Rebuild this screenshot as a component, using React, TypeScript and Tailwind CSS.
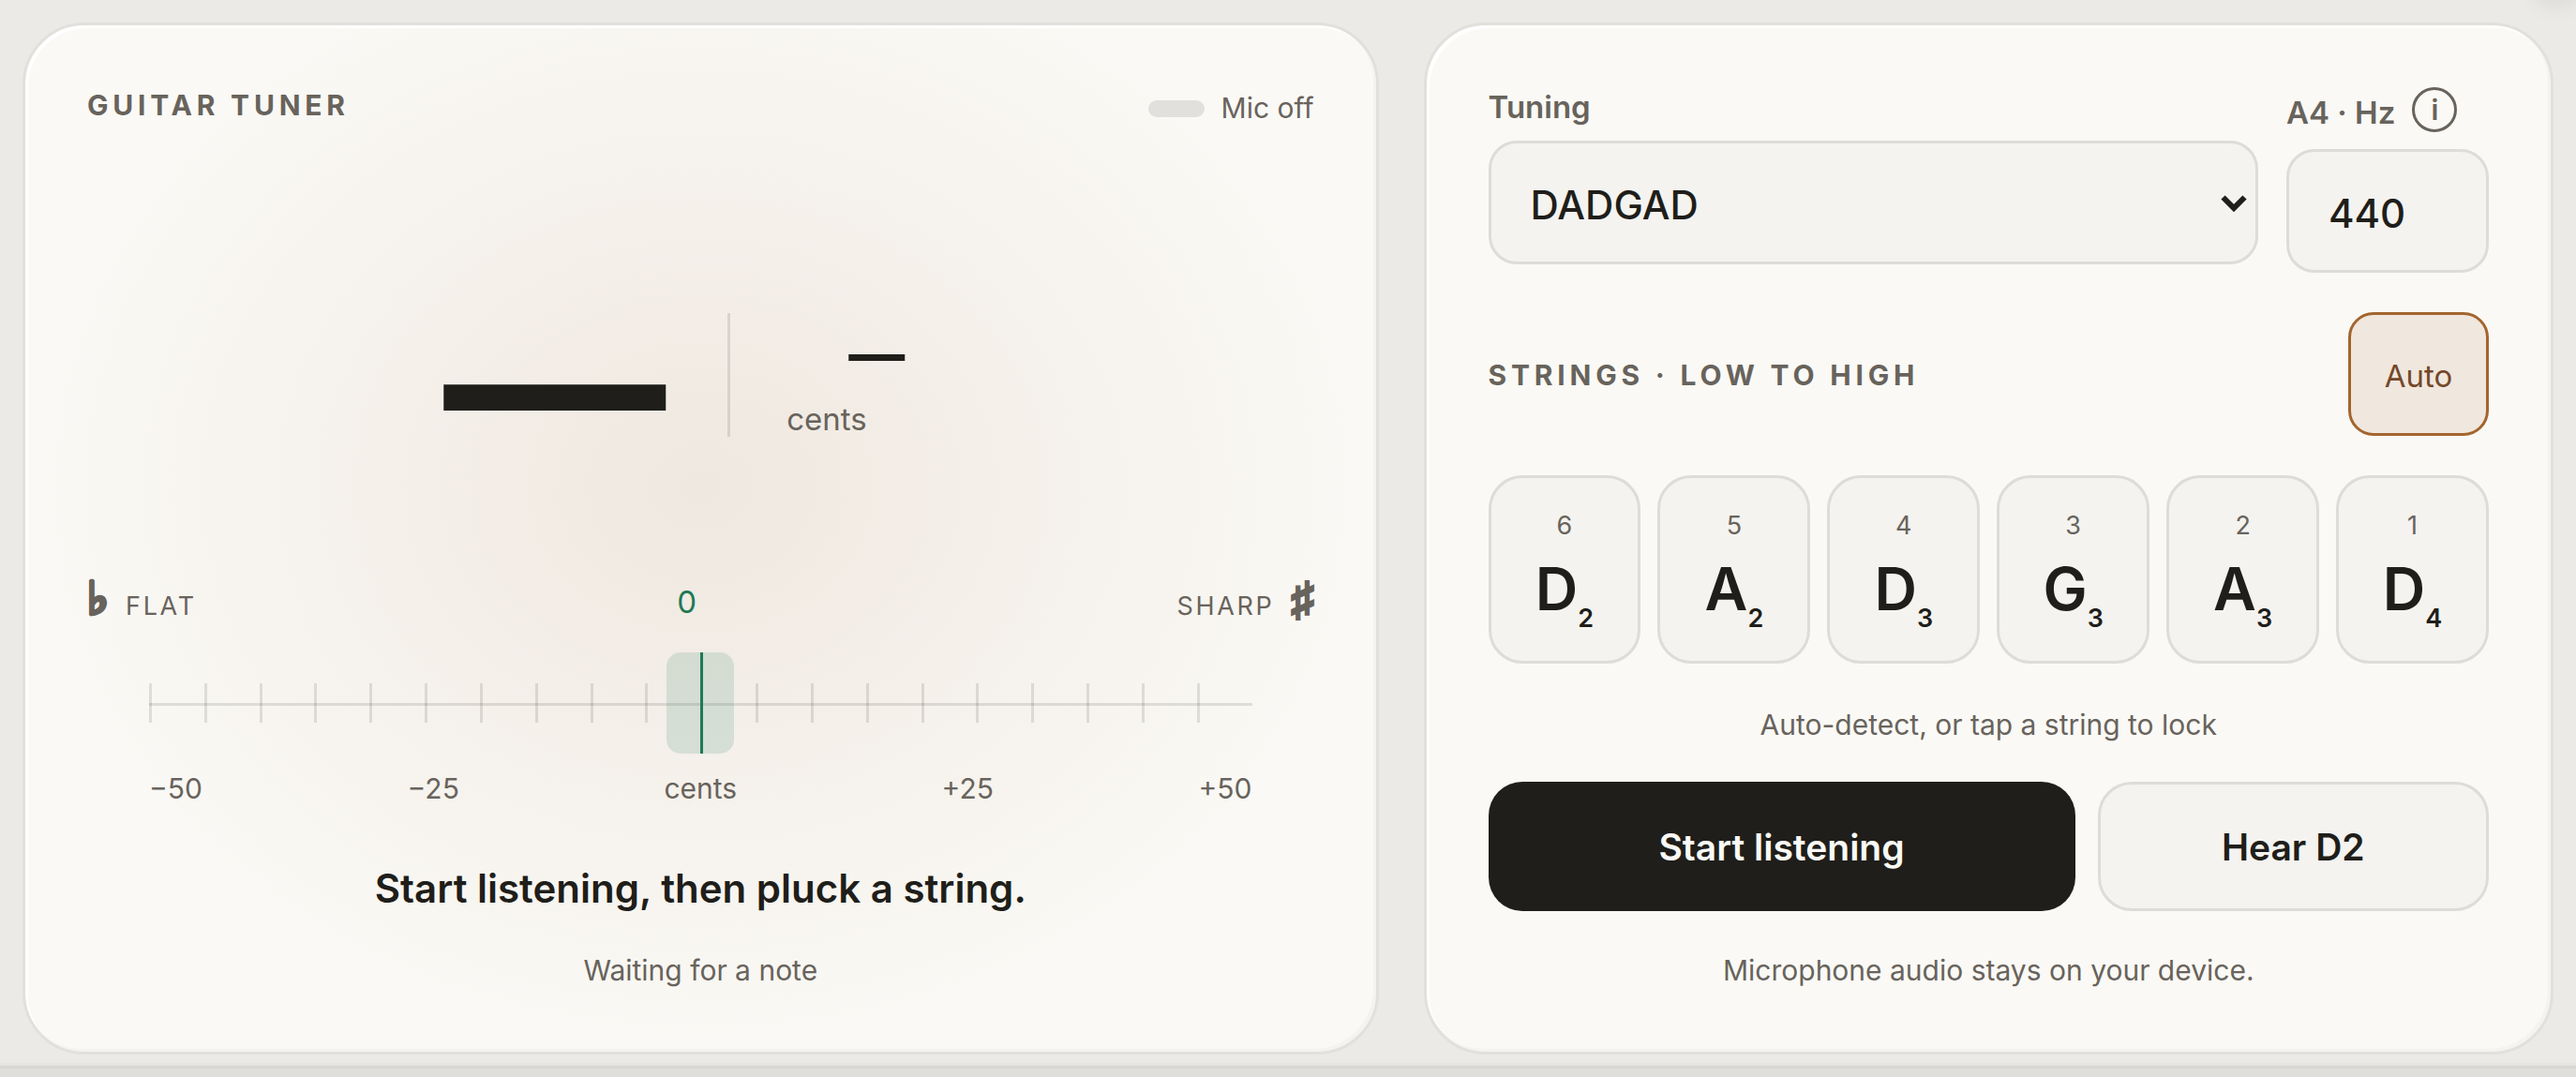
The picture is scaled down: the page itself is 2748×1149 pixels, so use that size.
import React, { useState } from 'react';
import clsx from 'clsx';

interface GuitarString {
  num: number;
  note: string;
  octave: number;
}

const TUNINGS: Record<string, GuitarString[]> = {
  DADGAD: [
    { num: 6, note: 'D', octave: 2 },
    { num: 5, note: 'A', octave: 2 },
    { num: 4, note: 'D', octave: 3 },
    { num: 3, note: 'G', octave: 3 },
    { num: 2, note: 'A', octave: 3 },
    { num: 1, note: 'D', octave: 4 },
  ],
  Standard: [
    { num: 6, note: 'E', octave: 2 },
    { num: 5, note: 'A', octave: 2 },
    { num: 4, note: 'D', octave: 3 },
    { num: 3, note: 'G', octave: 3 },
    { num: 2, note: 'B', octave: 3 },
    { num: 1, note: 'E', octave: 4 },
  ],
};

const SCALE_LABELS = ['−50', '−25', 'cents', '+25', '+50'];
const TICKS = Array.from({ length: 20 }, (_, i) => i);

const panel =
  'rounded-[66px] border-[3px] border-[#e1e0dc] p-[66px] shadow-[inset_3px_3px_0_#ffffff,inset_-3px_-3px_0_#f4f3ef]';
const field =
  'h-[132px] w-full rounded-[30px] border-[3px] border-[#dddcd8] bg-[#f4f3ef] px-[42px] pt-1 text-[42px] font-medium text-[#1f1e1a]';
const accidental =
  'pb-2 text-[48px] leading-[54px] font-bold [-webkit-text-stroke:3px_currentColor]';

function TunerDisplay({ listening }: { listening: boolean }) {
  return (
    <section
      className={clsx(
        panel,
        'flex flex-col bg-[#faf9f5] bg-[radial-gradient(ellipse_at_50%_45%,rgba(152,90,50,0.11),transparent_70%)]',
      )}
    >
      {/* Header */}
      <div className="flex items-start justify-between">
        <h1 className="text-[30px] leading-[39px] font-bold tracking-[0.16em] text-[#68635c]">GUITAR TUNER</h1>
        <div className="flex items-center gap-[18px] text-[30px] leading-[45px] text-[#68635c]">
          <span className="h-[18px] w-[60px] rounded-full bg-[#e1e0dc]" />
          {listening ? 'Mic on' : 'Mic off'}
        </div>
      </div>

      {/* Note readout */}
      <div className="mt-[152px] flex items-center justify-center gap-[60px]">
        <div className="w-[243px] text-[237px] leading-none font-bold">—</div>
        <div className="mb-[18px] h-[132px] w-[3px] bg-[#1f1e1a]/12" />
        <div className="flex w-[182px] flex-col gap-4 pr-14">
          <span className="text-right text-[60px] leading-none font-bold">—</span>
          <span className="text-[33px] leading-[48px] text-[#68635c]">cents</span>
        </div>
      </div>

      {/* Flat / sharp */}
      <div className="mt-[85px] flex h-[60px] items-center justify-between text-[#68635c]">
        <div className="flex items-center gap-[18px]">
          <span className={accidental}>♭</span>
          <span className="pt-2.5 text-[27px] leading-9 tracking-[0.1em]">FLAT</span>
        </div>
        <span className="pt-0.5 text-[33px] text-[#1f7a55]">0</span>
        <div className="flex items-center gap-[18px]">
          <span className="pt-2.5 text-[27px] leading-9 tracking-[0.1em]">SHARP</span>
          <span className={accidental}>♯</span>
        </div>
      </div>

      {/* Cents scale */}
      <div className="relative mx-[66px] mt-6 flex h-[108px] items-center">
        {TICKS.map(i => (
          <span key={i} className="h-[42px] flex-1 border-l-[3px] border-[#1f1e1a]/12" />
        ))}
        <span className="absolute inset-x-0 top-1/2 h-[3px] bg-[#1f1e1a]/12" />
        <span className="absolute inset-y-0 left-1/2 w-[72px] -translate-x-1/2 rounded-[15px] bg-[#1f7a55]/14" />
        <span className="absolute inset-y-0 left-1/2 w-[3px] bg-[#1f7a55]" />
      </div>
      <div className="mx-[66px] mt-[18px] flex justify-between text-[30px] leading-[39px] text-[#68635c]">
        {SCALE_LABELS.map(label => (
          <span key={label}>{label}</span>
        ))}
      </div>

      <p className="mt-[60px] text-center text-[42px] leading-[54px] font-semibold">
        Start listening, then pluck a string.
      </p>
      <p className="mt-[39px] text-center text-[30px] leading-[42px] text-[#68635c]">Waiting for a note</p>
    </section>
  );
}

export default function App() {
  const [tuning, setTuning] = useState('DADGAD');
  const [pitch, setPitch] = useState('440');
  const [locked, setLocked] = useState<number | null>(null);
  const [listening, setListening] = useState(false);

  const strings = TUNINGS[tuning];
  const target = strings.find(s => s.num === locked) ?? strings[0];

  return (
    <div className="relative flex min-h-screen flex-col overflow-hidden bg-[#ebeae6] font-['Inter','Liberation_Sans',sans-serif] text-[#1f1e1a]">
      {/* Shadow of the floating button above */}
      <div className="absolute -top-12 right-0 h-12 w-10 rounded-full shadow-[0_0_24px_6px_rgba(31,30,26,0.08)]" />

      <main className="grid grid-cols-[1.2fr_1fr] gap-12 px-6 pt-6">
        <TunerDisplay listening={listening} />

        <section className={clsx(panel, 'flex flex-col bg-[#faf9f5]')}>
          {/* Tuning and reference pitch */}
          <div className="grid grid-cols-[1fr_216px] items-start gap-[30px]">
            <div className="flex flex-col gap-[15px]">
              <label htmlFor="tuning" className="text-[33px] leading-[42px] font-semibold text-[#68635c]">
                Tuning
              </label>
              <div className="relative">
                <select
                  id="tuning"
                  value={tuning}
                  onChange={e => setTuning(e.target.value)}
                  className={clsx(field, 'appearance-none')}
                >
                  {Object.keys(TUNINGS).map(name => (
                    <option key={name} value={name}>{name}</option>
                  ))}
                </select>
                <svg
                  viewBox="0 0 28 18"
                  className="pointer-events-none absolute top-[58px] right-3 h-[18px] w-7"
                  fill="none"
                  stroke="currentColor"
                  strokeWidth="6"
                >
                  <path d="M2.5 2.5 14 14 25.5 2.5" />
                </svg>
              </div>
            </div>

            <div className="flex flex-col gap-[18px]">
              <div className="flex items-end gap-[18px] text-[#68635c]">
                <label htmlFor="pitch" className="text-[33px] leading-[42px] font-semibold whitespace-nowrap">
                  A4 · Hz
                </label>
                <button
                  type="button"
                  aria-label="About reference pitch"
                  className="flex h-12 w-12 items-center justify-center rounded-full border-[3px] border-[#68635c] text-[30px] leading-none font-semibold"
                >
                  i
                </button>
              </div>
              <input
                id="pitch"
                type="text"
                inputMode="numeric"
                value={pitch}
                onChange={e => setPitch(e.target.value)}
                className={field}
              />
            </div>
          </div>

          {/* Strings */}
          <div className="mt-[42px] flex items-center justify-between">
            <h2 className="pt-[3px] text-[30px] leading-[39px] font-bold tracking-[0.16em] text-[#68635c]">
              STRINGS · LOW TO HIGH
            </h2>
            <button
              type="button"
              aria-pressed={locked === null}
              onClick={() => setLocked(null)}
              className={clsx(
                'h-[132px] w-[150px] rounded-[27px] border-[3px] pt-1.5 text-[33px]',
                locked === null
                  ? 'border-[#a3652e] bg-[#f0e7de] text-[#74482a]'
                  : 'border-[#dddcd8] bg-[#f4f3ef] text-[#68635c]',
              )}
            >
              Auto
            </button>
          </div>

          <div className="mt-[42px] grid grid-cols-6 gap-[18px]">
            {strings.map(s => (
              <button
                key={s.num}
                type="button"
                aria-pressed={locked === s.num}
                onClick={() => setLocked(s.num)}
                className={clsx(
                  'flex h-[201px] flex-col items-center gap-[18px] rounded-[36px] border-[3px] pt-[33px]',
                  locked === s.num ? 'border-[#a3652e] bg-[#f0e7de]' : 'border-[#dddcd8] bg-[#f4f3ef]',
                )}
              >
                <span className="text-[27px] leading-9 text-[#68635c]">{s.num}</span>
                <span className="text-[63px] leading-none font-semibold">
                  {s.note}
                  <sub className="static align-[-18px] text-[27px] leading-[0]">{s.octave}</sub>
                </span>
              </button>
            ))}
          </div>

          <p className="mt-11 text-center text-[30px] leading-[42px] text-[#68635c]">
            Auto-detect, or tap a string to lock
          </p>

          {/* Actions */}
          <div className="mt-10 grid grid-cols-[3fr_2fr] gap-6">
            <button
              type="button"
              onClick={() => setListening(!listening)}
              className="h-[138px] rounded-[36px] bg-[#1f1e1a] pt-[3px] text-[39px] font-semibold text-[#faf9f5]"
            >
              {listening ? 'Stop listening' : 'Start listening'}
            </button>
            <button
              type="button"
              className="h-[138px] rounded-[36px] border-[3px] border-[#dddcd8] bg-[#f4f3ef] pt-[3px] text-[39px] font-semibold"
            >
              Hear {target.note}{target.octave}
            </button>
          </div>

          <p className="mt-[42px] text-center text-[30px] leading-[42px] text-[#68635c]">
            Microphone audio stays on your device.
          </p>
        </section>
      </main>

      {/* Top edge of the bottom bar */}
      <footer className="mt-3 min-h-3 flex-1 border-t-[3px] border-[#d8d7d3] bg-[#dfdeda] shadow-[0_-3px_0_#e5e4e0]" />
    </div>
  );
}
